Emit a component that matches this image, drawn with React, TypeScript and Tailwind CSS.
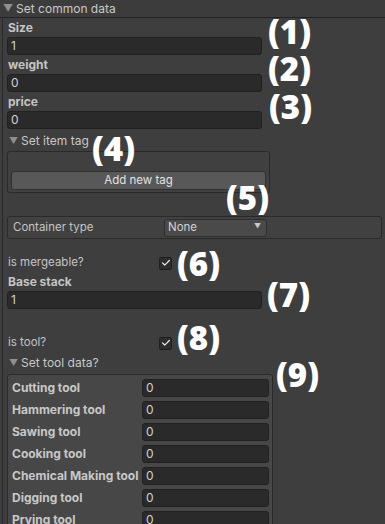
import { Check } from "lucide-react";

const labelFont = { fontFamily: "Inter, 'Noto Sans', sans-serif" };

function Callout({ n, className }: { n: number; className: string }) {
  return (
    <span
      className={`pointer-events-none absolute text-[33px] leading-none font-extrabold text-white ${className}`}
      style={{ fontFamily: "'Open Sans', 'Noto Sans', sans-serif" }}
    >
      ({n})
    </span>
  );
}

function Field({ value, className }: { value: string; className: string }) {
  return (
    <div
      className={`flex h-[18px] items-center rounded-[3px] border border-[#212121] bg-[#2a2a2a] pl-[3px] text-[12px] text-[#d2d2d2] ${className}`}
    >
      {value}
    </div>
  );
}

function Foldout({ title }: { title: string }) {
  return (
    <div className="flex h-[20px] items-center gap-[3px] pl-[2px] text-[12px] text-[#c8c8c8]">
      <span className="text-[9px] text-[#8f8f8f]">▼</span>
      {title}
    </div>
  );
}

function Toggle({ label, className }: { label: string; className: string }) {
  return (
    <div className={`flex items-center text-[11.5px] text-[#c4c4c4] ${className}`}>
      <span className="w-[152px] pl-[1px]">{label}</span>
      <span className="flex h-[13px] w-[13px] items-center justify-center rounded-[2px] border border-[#1e1e1e] bg-[#2c2c2c]">
        <Check size={10} strokeWidth={3} color="#e6e6e6" />
      </span>
    </div>
  );
}

const tools = [
  "Cutting tool",
  "Hammering tool",
  "Sawing tool",
  "Cooking tool",
  "Chemical Making tool",
  "Digging tool",
  "Prying tool",
];

export default function App() {
  return (
    <div
      className="flex h-[524px] w-[385px] flex-col overflow-hidden bg-[#3e3e3e]"
      style={labelFont}
    >
      {/* header */}
      <div className="flex h-[18px] shrink-0 items-center gap-[3px] border-b border-[#222222] bg-[#3c3c3c] pl-[3px] text-[12px] text-[#c8c8c8]">
        <span className="text-[10px] text-[#8f8f8f]">▼</span>
        Set common data
      </div>

      {/* body */}
      <div className="relative ml-[2px] flex-1 border-l border-[#2a2a2a] pl-[4px]">
        <div className="flex h-[19px] items-center pl-[1px] text-[12px] font-bold text-[#c4c4c4]">Size</div>
        <Field value="1" className="w-[255px]" />
        <div className="flex h-[19px] items-center pl-[1px] text-[12px] font-bold text-[#c4c4c4]">weight</div>
        <Field value="0" className="w-[255px]" />
        <div className="flex h-[19px] items-center pl-[1px] text-[12px] font-bold text-[#c4c4c4]">price</div>
        <Field value="0" className="w-[255px]" />

        <div className="mt-[2px]">
          <Foldout title="Set item tag" />
        </div>
        <div className="flex h-[42px] w-[263px] flex-col justify-end rounded-[3px] border border-[#2a2a2a] bg-[#404040] px-[3px] pb-[2px]">
          <div className="flex h-[19px] items-center justify-center rounded-[3px] border border-[#303030] bg-[#585858] text-[11.5px] text-[#e2e2e2]">
            Add new tag
          </div>
        </div>

        <div className="mt-[23px] flex h-[23px] w-[375px] items-center rounded-[3px] border border-[#2a2a2a] bg-[#414141] pl-[5px] text-[11.5px] text-[#c4c4c4]">
          <span className="w-[151px]">Container type</span>
          <div className="flex h-[18px] w-[103px] items-center justify-between rounded-[3px] border border-[#2e2e2e] bg-[#4a4a4a] pr-[5px] pl-[3px] text-[#d2d2d2]">
            None
            <span className="text-[7px] text-[#c8c8c8]">▼</span>
          </div>
        </div>

        <Toggle label="is mergeable?" className="mt-[17px] h-[14px]" />
        <div className="flex h-[21px] items-center pl-[1px] pt-[3px] text-[12px] font-bold text-[#c4c4c4]">Base stack</div>
        <Field value="1" className="w-[255px]" />

        <Toggle label="is tool?" className="mt-[27px] h-[14px]" />
        <div className="mt-[3px]">
          <Foldout title="Set tool data?" />
        </div>

        <div className="mt-[1px] flex w-[266px] flex-col gap-[4px] rounded-t-[3px] border border-[#2a2a2a] bg-[#474747] pt-[4px] pr-[3px] pl-[4px]">
          {tools.map((t) => (
            <div key={t} className="flex h-[18px] items-center">
              <span className="w-[130px] shrink-0 text-[12px] font-bold whitespace-nowrap text-[#c8c8c8]">{t}</span>
              <Field value="0" className="flex-1" />
            </div>
          ))}
        </div>

        <Callout n={1} className="top-[-3px] left-[265px]" />
        <Callout n={2} className="top-[34px] left-[265px]" />
        <Callout n={3} className="top-[72px] left-[266px]" />
        <Callout n={4} className="top-[114px] left-[89px]" />
        <Callout n={5} className="top-[163px] left-[223px]" />
        <Callout n={6} className="top-[229px] left-[174px]" />
        <Callout n={7} className="top-[260px] left-[264px]" />
        <Callout n={8} className="top-[303px] left-[174px]" />
        <Callout n={9} className="top-[340px] left-[273px]" />
      </div>

      <div className="h-[5px] shrink-0 bg-[#282828]" />
    </div>
  );
}
